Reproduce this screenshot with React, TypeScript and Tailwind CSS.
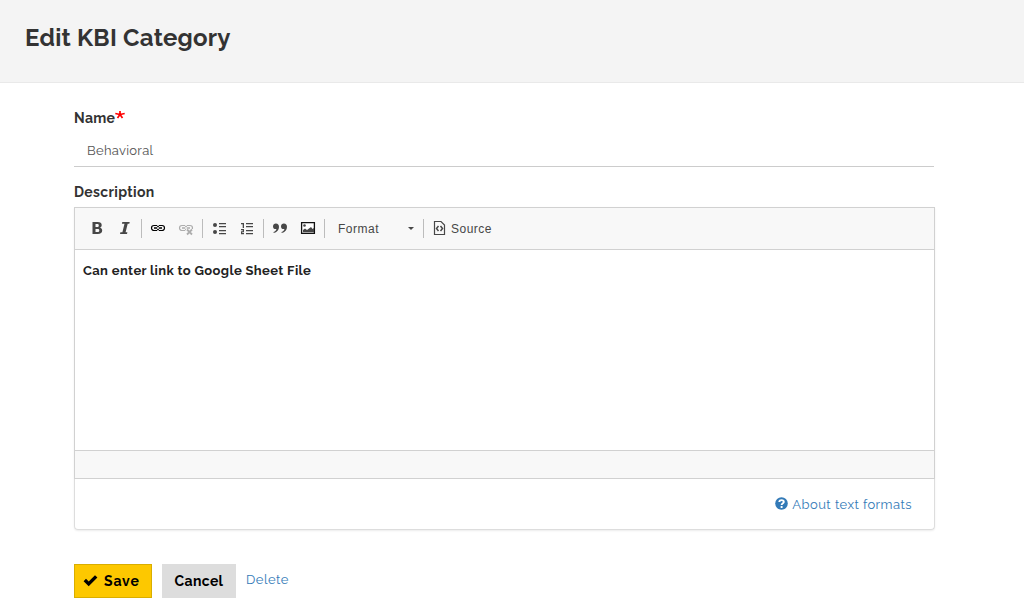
import type { ReactNode } from "react";

function Divider() {
  return <span className="h-[19px] w-px shrink-0 bg-[#bcbcbc]" />;
}

function Tool({ label, children }: { label: string; children: ReactNode }) {
  return (
    <button type="button" aria-label={label} className="flex h-7 w-7 shrink-0 items-center justify-center pb-[2px]">
      <svg width="16" height="16" viewBox="0 0 16 16" fill="none" stroke="none">
        {children}
      </svg>
    </button>
  );
}

function ChainLink() {
  return (
    <>
      <path d="M7 5.500H4a2.500 2.500 0 0 0 0 5H7M9 5.500h3a2.500 2.500 0 0 1 0 5H9" strokeWidth="1.200" />
      <path d="M7 5.500 8 7l1-1.500M7 10.500 8 9l1 1.500" strokeWidth="1" />
      <path d="M4 8h3.300M8.700 8H12" strokeWidth="1.500" />
    </>
  );
}

function Toolbar() {
  return (
    <div className="flex h-[42px] items-center border-b border-[#d1d1d1] bg-[#f8f8f8] pl-2">
      <Tool label="Bold">
        <path fillRule="evenodd" fill="#474747" d="M3.500 2h5.200c2.600 0 4 1.100 4 3.100 0 1.300-.7 2.200-1.700 2.600 1.400.3 2.200 1.300 2.200 2.800 0 2.300-1.600 3.500-4.400 3.500H3.500zM6.500 4v2.900h1.600c1.100 0 1.700-.5 1.700-1.500S9.200 4 8.100 4zm0 4.900V12h1.900c1.300 0 1.900-.5 1.900-1.600s-.6-1.500-1.900-1.500z" />
      </Tool>
      <Tool label="Italic">
        <path fill="#474747" d="M5.300 2h7.400l-.4 1.800h-1.600L8.600 12.200h1.800L10 14H3l.4-1.800h2L7.500 3.800H4.900z" />
      </Tool>
      <span className="w-[2px]" />
      <Divider />
      <span className="w-[2px]" />
      <Tool label="Link">
        <g stroke="#000"><ChainLink /></g>
      </Tool>
      <Tool label="Unlink">
        <g stroke="#adadad">
          <ChainLink />
          <path d="M8 9h7v6H8z" fill="#f8f8f8" stroke="none" />
          <path d="m9 9.500 5 5m0-5-5 5" strokeWidth="1.800" />
        </g>
      </Tool>
      <span className="w-[2px]" />
      <Divider />
      <span className="w-[2px]" />
      <Tool label="Bulleted list">
        <g fill="#474747">
          <circle cx="4" cy="5" r="2" />
          <circle cx="4" cy="12" r="2" />
          <path d="M8 3h7v1.200H8zM8 6h7v1.200H8zM8 10h7v1.200H8zM8 13h7v1.200H8z" />
        </g>
      </Tool>
      <Tool label="Numbered list">
        <g fill="#474747">
          <path d="M2 3h3v5H3.700V4.200H2zM2 9h3v3.200H3.200V13H5v1.200H2v-3h1.800v-1H2z" />
          <path d="M7 3h7v1.200H7zM7 6h7v1.200H7zM7 10h7v1.200H7zM7 13h7v1.200H7z" />
        </g>
      </Tool>
      <span className="w-[2px]" />
      <Divider />
      <span className="w-[2px]" />
      <Tool label="Block quote">
        <g fill="#474747">
          <path d="M3.900 3.500c2 0 3.100 1.400 3.100 3.500 0 3-1.900 5.300-5.400 6v-1c1.700-.6 2.600-1.600 2.800-3C2.200 9.300 1 8.200 1 6.400c0-1.700 1.200-2.900 2.900-2.900z" />
          <path d="M11.900 3.500c2 0 3.100 1.400 3.100 3.500 0 3-1.900 5.300-5.400 6v-1c1.700-.6 2.600-1.600 2.800-3-2.200.3-3.400-.8-3.400-2.600 0-1.700 1.200-2.900 2.900-2.900z" />
        </g>
      </Tool>
      <Tool label="Image">
        <path d="M1.600 2.600h12.800v10.800H1.600z" stroke="#111" strokeWidth="1.300" fill="#fff" />
        <path d="M3 12.300V10l2-1.500L7 10l4-3 1.500 2L14 8v4.300z" fill="#444" />
        <circle cx="4.500" cy="5.500" r="1.300" fill="#444" />
      </Tool>
      <span className="w-[2px]" />
      <Divider />
      <button type="button" className="flex h-7 w-[98px] shrink-0 items-center justify-between pl-[13px] pr-[9px] font-['Liberation_Sans',sans-serif] text-[12px] tracking-[0.5px] text-[#474747]">
        <span>Format</span>
        <span className="h-0 w-0 border-x-[3px] border-t-[3px] border-x-transparent border-t-[#474747]" />
      </button>
      <Divider />
      <button type="button" className="ml-[7px] flex h-7 items-center gap-1 font-['Liberation_Sans',sans-serif] text-[12px] tracking-[0.5px] text-[#474747]">
        <svg width="16" height="16" viewBox="0 0 16 16" className="mb-[2px]" fill="none" stroke="#474747">
          <path d="M3.500 1.500h6.500l3.500 3.500v9.500h-10z" strokeWidth="1.200" />
          <path d="M7.500 6 5.500 8.500l2 2.500M9.500 6l2 2.500-2 2.500" strokeWidth="1.500" />
        </svg>
        <span>Source</span>
      </button>
    </div>
  );
}

export default function App() {
  return (
    <div className="h-[614px] overflow-hidden bg-white font-['Raleway','Lato',sans-serif] whitespace-nowrap text-[#333]">
      <header className="h-[83px] border-b border-[#e9e9e9] bg-[#f4f4f4] pt-[21px] pl-[25px]">
        <h1 className="text-[24px] leading-[34px] font-bold tracking-[0.250px]">Edit KBI Category</h1>
      </header>
      <main className="ml-[74px] w-[861px]">
        <label className="flex h-[52px] items-start pt-[25px] text-[14px] leading-5 font-bold">
          <span className="tracking-[0.3px]">Name</span>
          <svg width="10" height="8" viewBox="0 0 10 8" className="mt-[3px]" fill="none" stroke="#f00" strokeWidth="1.700">
            <path d="M5 3.500V0M5 3.500.3 2.500M5 3.500l4.700-1M5 3.500 2.500 7M5 3.500 7.500 7" />
          </svg>
        </label>
        <div className="flex h-8 w-[860px] items-center border-b border-[#ccc] pl-[13px] text-[13px] tracking-[0.3px] text-[#555]">
          Behavioral
        </div>
        <div className="flex h-10 items-center pt-[9px] text-[14px] leading-5 font-bold tracking-[0.340px]">Description</div>
        <section className="h-[323px] rounded-b-[4px] border border-t-0 border-[#ddd] shadow-[0_1px_2px_rgba(0,0,0,0.08)]">
          <div className="-mx-px border border-[#d1d1d1]">
            <Toolbar />
            <div className="h-[200px] px-2 pt-[11px] text-[13px] leading-5 font-bold tracking-[0.360px] text-[#222]">
              Can enter link to Google Sheet File
            </div>
            <div className="h-7 border-t border-[#d1d1d1] bg-[#f8f8f8]" />
          </div>
          <a className="flex h-[50px] items-center justify-end gap-1 pr-[22px] text-[13px] text-[#337ab7]">
            <svg width="13" height="13" viewBox="0 0 13 13" className="mb-px">
              <circle cx="6.500" cy="6.500" r="6.300" fill="#337ab7" />
              <path d="M4.300 5.100c0-2.700 4.500-2.500 4.500-.2C8.800 6.200 6.700 6.300 6.600 8M6.600 9v1.900" fill="none" stroke="#fff" strokeWidth="1.900" />
            </svg>
            <span className="pt-px tracking-[0.440px]">About text formats</span>
          </a>
        </section>
        <div className="mt-[34px] flex h-[34px] text-[14px] font-bold text-black">
          <button type="button" className="flex w-[78px] items-center gap-[6px] border border-[#d9ae00] bg-[#fdc800] pl-2">
            <svg width="15" height="14" viewBox="0 0 15 14">
              <path d="M.6 7.200 3 4.800l2.700 2.700L12 1.200l2.400 2.400L5.700 12.300z" />
            </svg>
            <span className="tracking-[0.9px]">Save</span>
          </button>
          <button type="button" className="ml-[10px] w-[74px] bg-[#ddd] tracking-[0.350px]">Cancel</button>
          <a className="ml-[10px] pt-[6px] text-[13px] leading-5 font-normal tracking-[0.5px] text-[#337ab7]">Delete</a>
        </div>
      </main>
    </div>
  );
}
